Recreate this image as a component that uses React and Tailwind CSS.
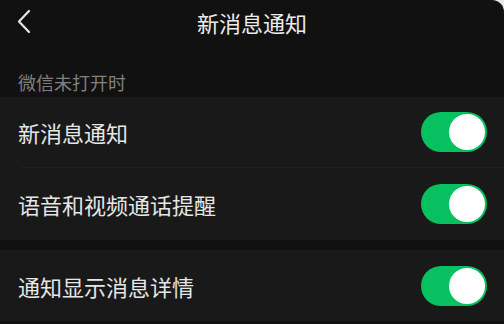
import React from 'react';

function Toggle() {
  return (
    <div className="w-[66px] h-[40px] rounded-full bg-[#07c160] flex items-center justify-end pr-[2px]">
      <div className="w-[36px] h-[36px] rounded-full bg-white" />
    </div>
  );
}

export default function App() {
  const font = { fontFamily: '"Noto Sans CJK SC", "Noto Sans", sans-serif' };

  return (
    <div className="w-[504px] h-[324px] bg-[#e8e8e8] overflow-hidden" style={font}>
      <div className="w-full h-full bg-[#111111] rounded-tr-[12px] flex flex-col">
        {/* header */}
        <div className="relative h-[44px] flex items-center justify-center shrink-0">
          <svg className="absolute left-[16px] top-[9px]" width="16" height="26" viewBox="0 0 16 26">
            <path d="M13 2 L3 12.5 L13 23" fill="none" stroke="#e6e6e6" strokeWidth="2.2" strokeLinecap="round" strokeLinejoin="round" />
          </svg>
          <span className="text-[22px] leading-none text-[#ececec]">新消息通知</span>
        </div>

        {/* section label */}
        <div className="h-[53px] flex items-end pb-[6px] px-[18px] shrink-0">
          <span className="text-[18px] leading-none text-[#808080]">微信未打开时</span>
        </div>

        {/* group 1 */}
        <div className="bg-[#191919] shrink-0">
          <div className="h-[70px] flex items-center justify-between pl-[18px] pr-[17px]">
            <span className="text-[22px] leading-none text-[#e6e6e6]">新消息通知</span>
            <Toggle />
          </div>
          <div className="ml-[22px] h-px bg-[#232323]" />
          <div className="h-[72px] flex items-center justify-between pl-[18px] pr-[17px]">
            <span className="text-[22px] leading-none text-[#e6e6e6]">语音和视频通话提醒</span>
            <Toggle />
          </div>
        </div>

        {/* gap */}
        <div className="h-[10px] shrink-0" />

        {/* group 2 */}
        <div className="bg-[#191919] shrink-0">
          <div className="h-[71px] flex items-center justify-between pl-[18px] pr-[17px]">
            <span className="text-[22px] leading-none text-[#e6e6e6]">通知显示消息详情</span>
            <Toggle />
          </div>
        </div>
      </div>
    </div>
  );
}
